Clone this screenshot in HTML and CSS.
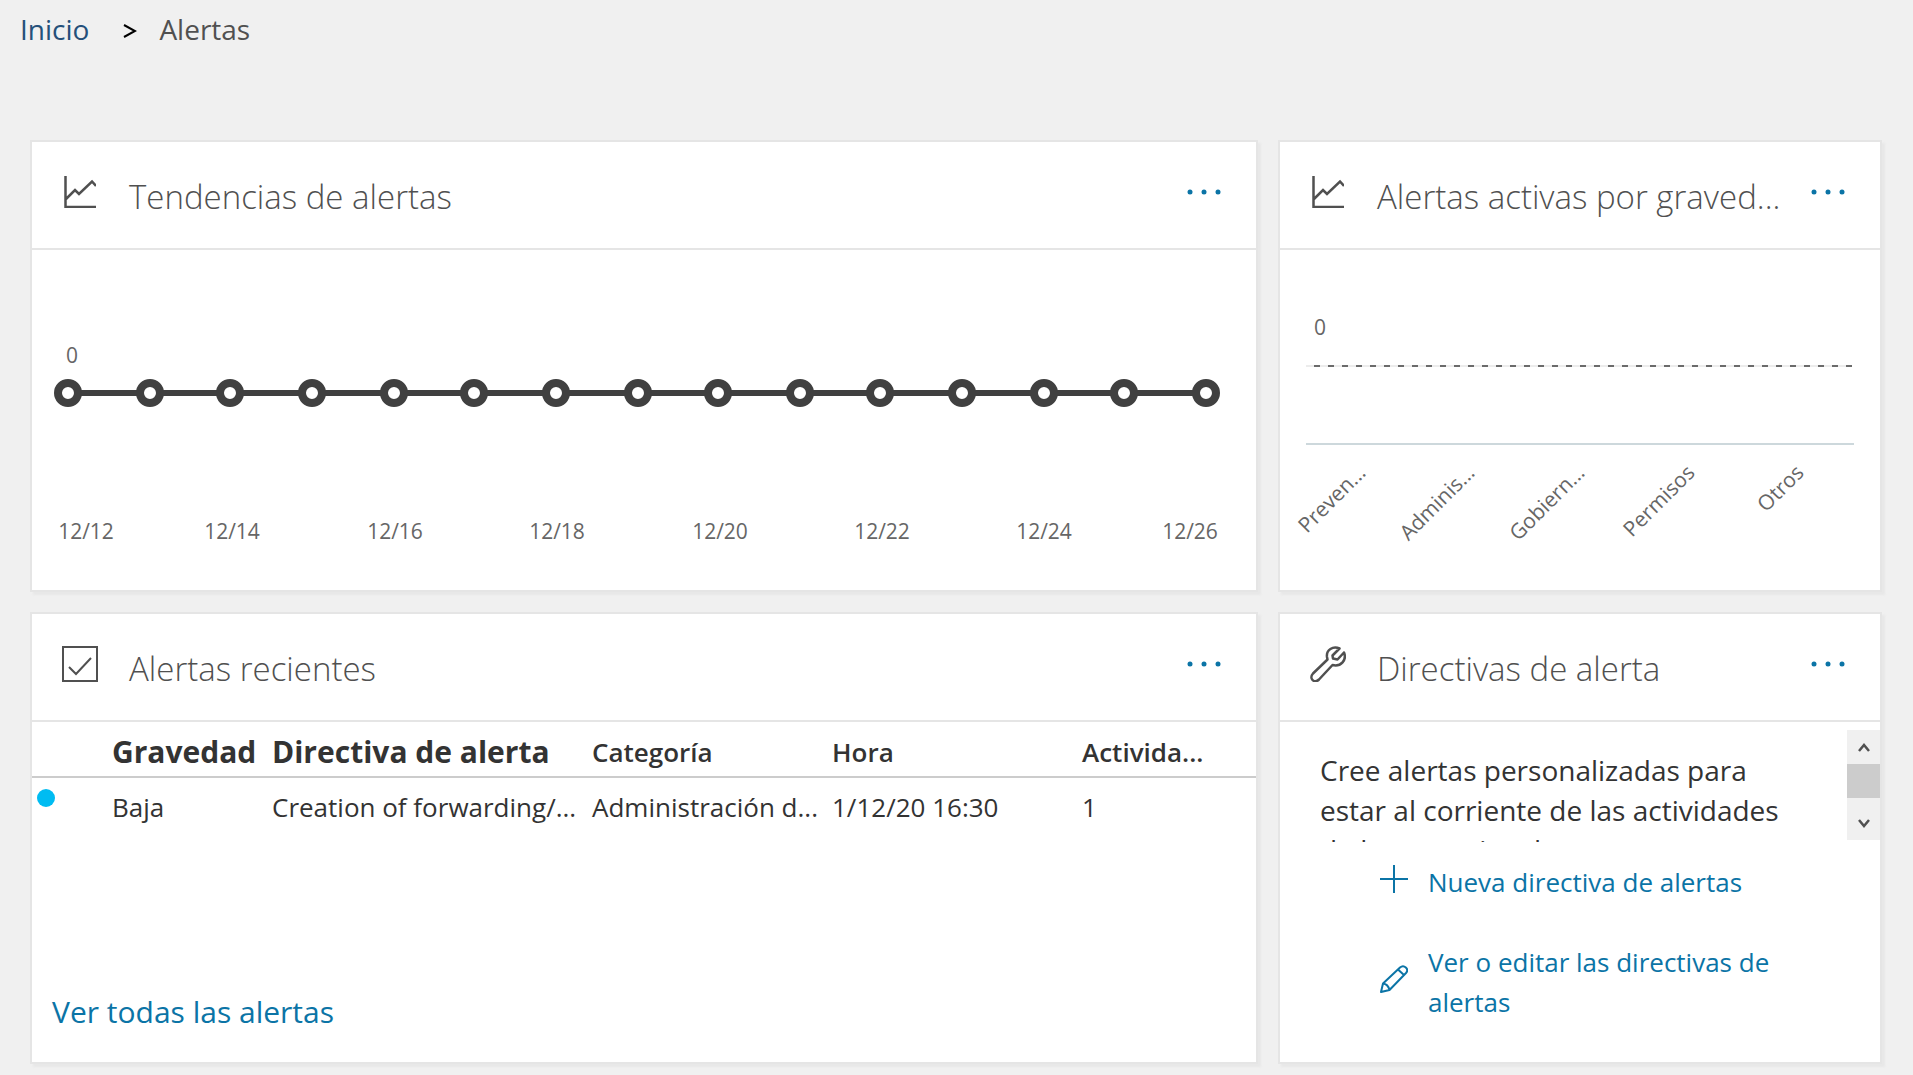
FILE: index.html
```
<!DOCTYPE html>
<html lang="es">
<head>
    <meta charset="UTF-8">
    <meta name="viewport" content="width=device-width, initial-scale=1.0">
    <title>Alertas</title>
    <link rel="stylesheet" href="styles.css">
</head>
<body>
    <nav class="breadcrumb">
        <a href="#">Inicio</a>
        <svg class="separator" width="14" height="14" viewBox="0 0 14 14"><path d="M1 1 L12 7 L1 13" fill="none" stroke="#000" stroke-width="2"/></svg>
        <span>Alertas</span>
    </nav>

    <main class="dashboard">
        <!-- Tendencias -->
        <section class="card wide">
            <div class="card-header">
                <svg class="icon" viewBox="0 0 32 32"><path d="M1.500 0 V31 H32 M2 23 L11 14 L15 18 L28 5.500 L32 10" fill="none" stroke="#505050" stroke-width="2.500"/></svg>
                <h2>Tendencias de alertas</h2>
                <button class="more" aria-label="Más opciones"><svg width="34" height="6" viewBox="0 0 34 6"><circle cx="3" cy="3" r="2.500"/><circle cx="17" cy="3" r="2.500"/><circle cx="31" cy="3" r="2.500"/></svg></button>
            </div>
            <svg class="chart" viewBox="0 0 1224 340">
                <text x="34" y="113">0</text>
                <line class="trend" x1="36" y1="143" x2="1174" y2="143"/>
                <g class="points">
                    <circle cx="36" cy="143" r="10"/>
                    <circle cx="118" cy="143" r="10"/>
                    <circle cx="198" cy="143" r="10"/>
                    <circle cx="280" cy="143" r="10"/>
                    <circle cx="362" cy="143" r="10"/>
                    <circle cx="442" cy="143" r="10"/>
                    <circle cx="524" cy="143" r="10"/>
                    <circle cx="606" cy="143" r="10"/>
                    <circle cx="686" cy="143" r="10"/>
                    <circle cx="768" cy="143" r="10"/>
                    <circle cx="848" cy="143" r="10"/>
                    <circle cx="930" cy="143" r="10"/>
                    <circle cx="1012" cy="143" r="10"/>
                    <circle cx="1092" cy="143" r="10"/>
                    <circle cx="1174" cy="143" r="10"/>
                </g>
                <g text-anchor="middle">
                    <text x="54" y="289">12/12</text>
                    <text x="200" y="289">12/14</text>
                    <text x="363" y="289">12/16</text>
                    <text x="525" y="289">12/18</text>
                    <text x="688" y="289">12/20</text>
                    <text x="850" y="289">12/22</text>
                    <text x="1012" y="289">12/24</text>
                    <text x="1158" y="289">12/26</text>
                </g>
            </svg>
        </section>

        <!-- Gravedad -->
        <section class="card">
            <div class="card-header">
                <svg class="icon" viewBox="0 0 32 32"><path d="M1.500 0 V31 H32 M2 23 L11 14 L15 18 L28 5.500 L32 10" fill="none" stroke="#505050" stroke-width="2.500"/></svg>
                <h2>Alertas activas por graved...</h2>
                <button class="more" aria-label="Más opciones"><svg width="34" height="6" viewBox="0 0 34 6"><circle cx="3" cy="3" r="2.500"/><circle cx="17" cy="3" r="2.500"/><circle cx="31" cy="3" r="2.500"/></svg></button>
            </div>
            <svg class="chart" viewBox="0 0 600 340">
                <text x="34" y="85">0</text>
                <line x1="26" y1="116" x2="572" y2="116" stroke="#ececec" stroke-width="2"/>
                <line x1="34" y1="116" x2="573" y2="116" stroke="#6b6b6b" stroke-width="2" stroke-dasharray="6 8"/>
                <line x1="26" y1="194" x2="574" y2="194" stroke="#cdd8dc" stroke-width="2"/>
                <g text-anchor="end">
                    <text transform="translate(87 224) rotate(-45)">Preven...</text>
                    <text transform="translate(196 224) rotate(-45)">Adminis...</text>
                    <text transform="translate(306 224) rotate(-45)">Gobiern...</text>
                    <text transform="translate(416 224) rotate(-45)">Permisos</text>
                    <text transform="translate(525 224) rotate(-45)">Otros</text>
                </g>
            </svg>
        </section>

        <!-- Recientes -->
        <section class="card wide">
            <div class="card-header">
                <svg class="icon large" viewBox="0 0 36 36"><path d="M1 1 H35 V35 H1 Z M7 21 L14 28 L29 12" fill="none" stroke="#505050" stroke-width="2"/></svg>
                <h2>Alertas recientes</h2>
                <button class="more" aria-label="Más opciones"><svg width="34" height="6" viewBox="0 0 34 6"><circle cx="3" cy="3" r="2.500"/><circle cx="17" cy="3" r="2.500"/><circle cx="31" cy="3" r="2.500"/></svg></button>
            </div>
            <div class="recent">
                <table>
                    <thead>
                        <tr>
                            <th class="col-status"></th>
                            <th class="col-severity strong">Gravedad</th>
                            <th class="col-policy strong">Directiva de alerta</th>
                            <th class="col-category">Categoría</th>
                            <th class="col-time">Hora</th>
                            <th>Activida...</th>
                        </tr>
                    </thead>
                    <tbody>
                        <tr>
                            <td class="status"><span class="dot"></span></td>
                            <td>Baja</td>
                            <td>Creation of forwarding/...</td>
                            <td>Administración d...</td>
                            <td>1/12/20 16:30</td>
                            <td>1</td>
                        </tr>
                    </tbody>
                </table>
                <a href="#" class="view-all">Ver todas las alertas</a>
            </div>
        </section>

        <!-- Directivas -->
        <section class="card">
            <div class="card-header">
                <svg class="icon large" viewBox="0 0 36 36"><path d="M29.500 2.500 C23 -0.500 16 4 17 11 L17.500 13.500 L3 27.500 C-1.500 32.500 4.500 38 9 33.500 L22.500 19 C31 21 37 14 34 6.500 L27.500 13.500 L23 12.500 L22.500 9.500 Z" fill="none" stroke="#505050" stroke-width="2.500" stroke-linejoin="round"/></svg>
                <h2>Directivas de alerta</h2>
                <button class="more" aria-label="Más opciones"><svg width="34" height="6" viewBox="0 0 34 6"><circle cx="3" cy="3" r="2.500"/><circle cx="17" cy="3" r="2.500"/><circle cx="31" cy="3" r="2.500"/></svg></button>
            </div>
            <div class="policies">
                <div class="scroll-box">
                    <p>Cree alertas personalizadas para estar al corriente de las actividades de los usuarios de</p>
                    <div class="scrollbar">
                        <button aria-label="Subir"><svg width="12" height="9" viewBox="0 0 12 9"><path d="M1 8 L6 2 L11 8" fill="none" stroke="#505050" stroke-width="2.500"/></svg></button>
                        <div class="thumb"></div>
                        <button class="down" aria-label="Bajar"><svg width="12" height="9" viewBox="0 0 12 9"><path d="M1 1 L6 7 L11 1" fill="none" stroke="#505050" stroke-width="2.500"/></svg></button>
                    </div>
                </div>
                <a href="#" class="action">
                    <svg width="28" height="28" viewBox="0 0 28 28"><path d="M14 0 V28 M0 14 H28" fill="none" stroke="#0b74a6" stroke-width="2"/></svg>
                    <span>Nueva directiva de alertas</span>
                </a>
                <a href="#" class="action">
                    <svg width="28" height="28" viewBox="0 0 28 28"><path d="M1 27 L3 18.500 L20 2.500 C24 -1 29.500 4 26 8 L9.500 25 Z M3 18.500 Q8 19 9.500 25 M18 4.500 L24 10" fill="none" stroke="#0b74a6" stroke-width="2" stroke-linejoin="round"/></svg>
                    <span>Ver o editar las directivas de alertas</span>
                </a>
            </div>
        </section>
    </main>
</body>
</html>
```

FILE: styles.css
```
* {
    box-sizing: border-box;
    margin: 0;
    padding: 0;
}

body {
    background-color: #f0f0f0;
    color: #333333;
    font-family: "Open Sans", "Noto Sans", sans-serif;
    font-size: 26px;
    line-height: 40px;
}

a {
    color: #0b74a6;
    text-decoration: none;
}

button {
    background: none;
    border: none;
    cursor: pointer;
}

.breadcrumb {
    display: flex;
    align-items: center;
    height: 140px;
    padding: 8px 20px 90px;
    color: #505050;
    font-size: 28px;
}

.breadcrumb a {
    color: #24507a;
}

.separator {
    margin: 4px 22px 0 34px;
}

.dashboard {
    display: grid;
    grid-template-columns: repeat(3, minmax(0, 1fr));
    gap: 20px;
    padding: 0 31px 11px 30px;
}

.card {
    display: flex;
    flex-direction: column;
    min-height: 452px;
    background-color: #ffffff;
    border: 2px solid #e5e5e5;
    box-shadow: 3px 3px 2px #e8e8e8;
}

.wide {
    grid-column: span 2;
}

.card-header {
    display: flex;
    align-items: center;
    height: 108px;
    padding: 0 35px 0 32px;
    border-bottom: 2px solid #e5e5e5;
}

.icon {
    flex: none;
    width: 32px;
    height: 32px;
    margin: 0 33px 6px 0;
}

.large {
    width: 36px;
    height: 36px;
    margin: 0 31px 6px -2px;
}

.card-header h2 {
    flex: 1;
    padding-top: 4px;
    color: #505050;
    font-size: 33px;
    font-weight: 300;
    line-height: 48px;
    white-space: nowrap;
}

.more {
    display: flex;
    padding: 10px 0;
    margin-bottom: 6px;
}

.more svg {
    fill: #0b74a6;
}

.chart {
    display: block;
    width: 100%;
}

.chart text {
    fill: #666666;
    font-size: 21px;
}

.trend {
    stroke: #404040;
    stroke-width: 6;
}

.points circle {
    fill: #ffffff;
    stroke: #404040;
    stroke-width: 8;
}

.recent {
    display: flex;
    flex: 1;
    flex-direction: column;
    justify-content: space-between;
}

table {
    width: 100%;
    border-collapse: collapse;
    table-layout: fixed;
}

th,
td {
    text-align: left;
    white-space: nowrap;
}

th {
    height: 55px;
    padding-top: 6px;
    border-bottom: 2px solid #cccccc;
    font-weight: 600;
}

td {
    height: 58px;
}

.strong {
    font-size: 30px;
    font-weight: 700;
}

.col-status {
    width: 80px;
}

.col-severity {
    width: 160px;
}

.col-policy {
    width: 320px;
}

.col-category {
    width: 240px;
}

.col-time {
    width: 250px;
}

.status {
    padding: 0 0 20px 5px;
    line-height: 20px;
}

.dot {
    display: inline-block;
    width: 18px;
    height: 18px;
    background-color: #00bcf2;
    border-radius: 50%;
}

.view-all {
    padding: 0 20px 30px;
    font-size: 30px;
}

.policies {
    padding-top: 8px;
}

.scroll-box {
    display: flex;
    height: 112px;
    overflow: hidden;
}

.scroll-box p {
    flex: 1;
    padding: 20px 60px 0 40px;
    font-size: 28px;
}

.scrollbar {
    display: flex;
    flex-direction: column;
    width: 33px;
    height: 110px;
    background-color: #f0f0f0;
}

.scrollbar button {
    height: 34px;
}

.scrollbar .down {
    margin-top: auto;
}

.thumb {
    height: 34px;
    background-color: #cccccc;
}

.action {
    display: flex;
    align-items: center;
    gap: 20px;
    padding: 20px 60px 20px 100px;
}

.action svg {
    flex: none;
    margin-bottom: 6px;
}
```
